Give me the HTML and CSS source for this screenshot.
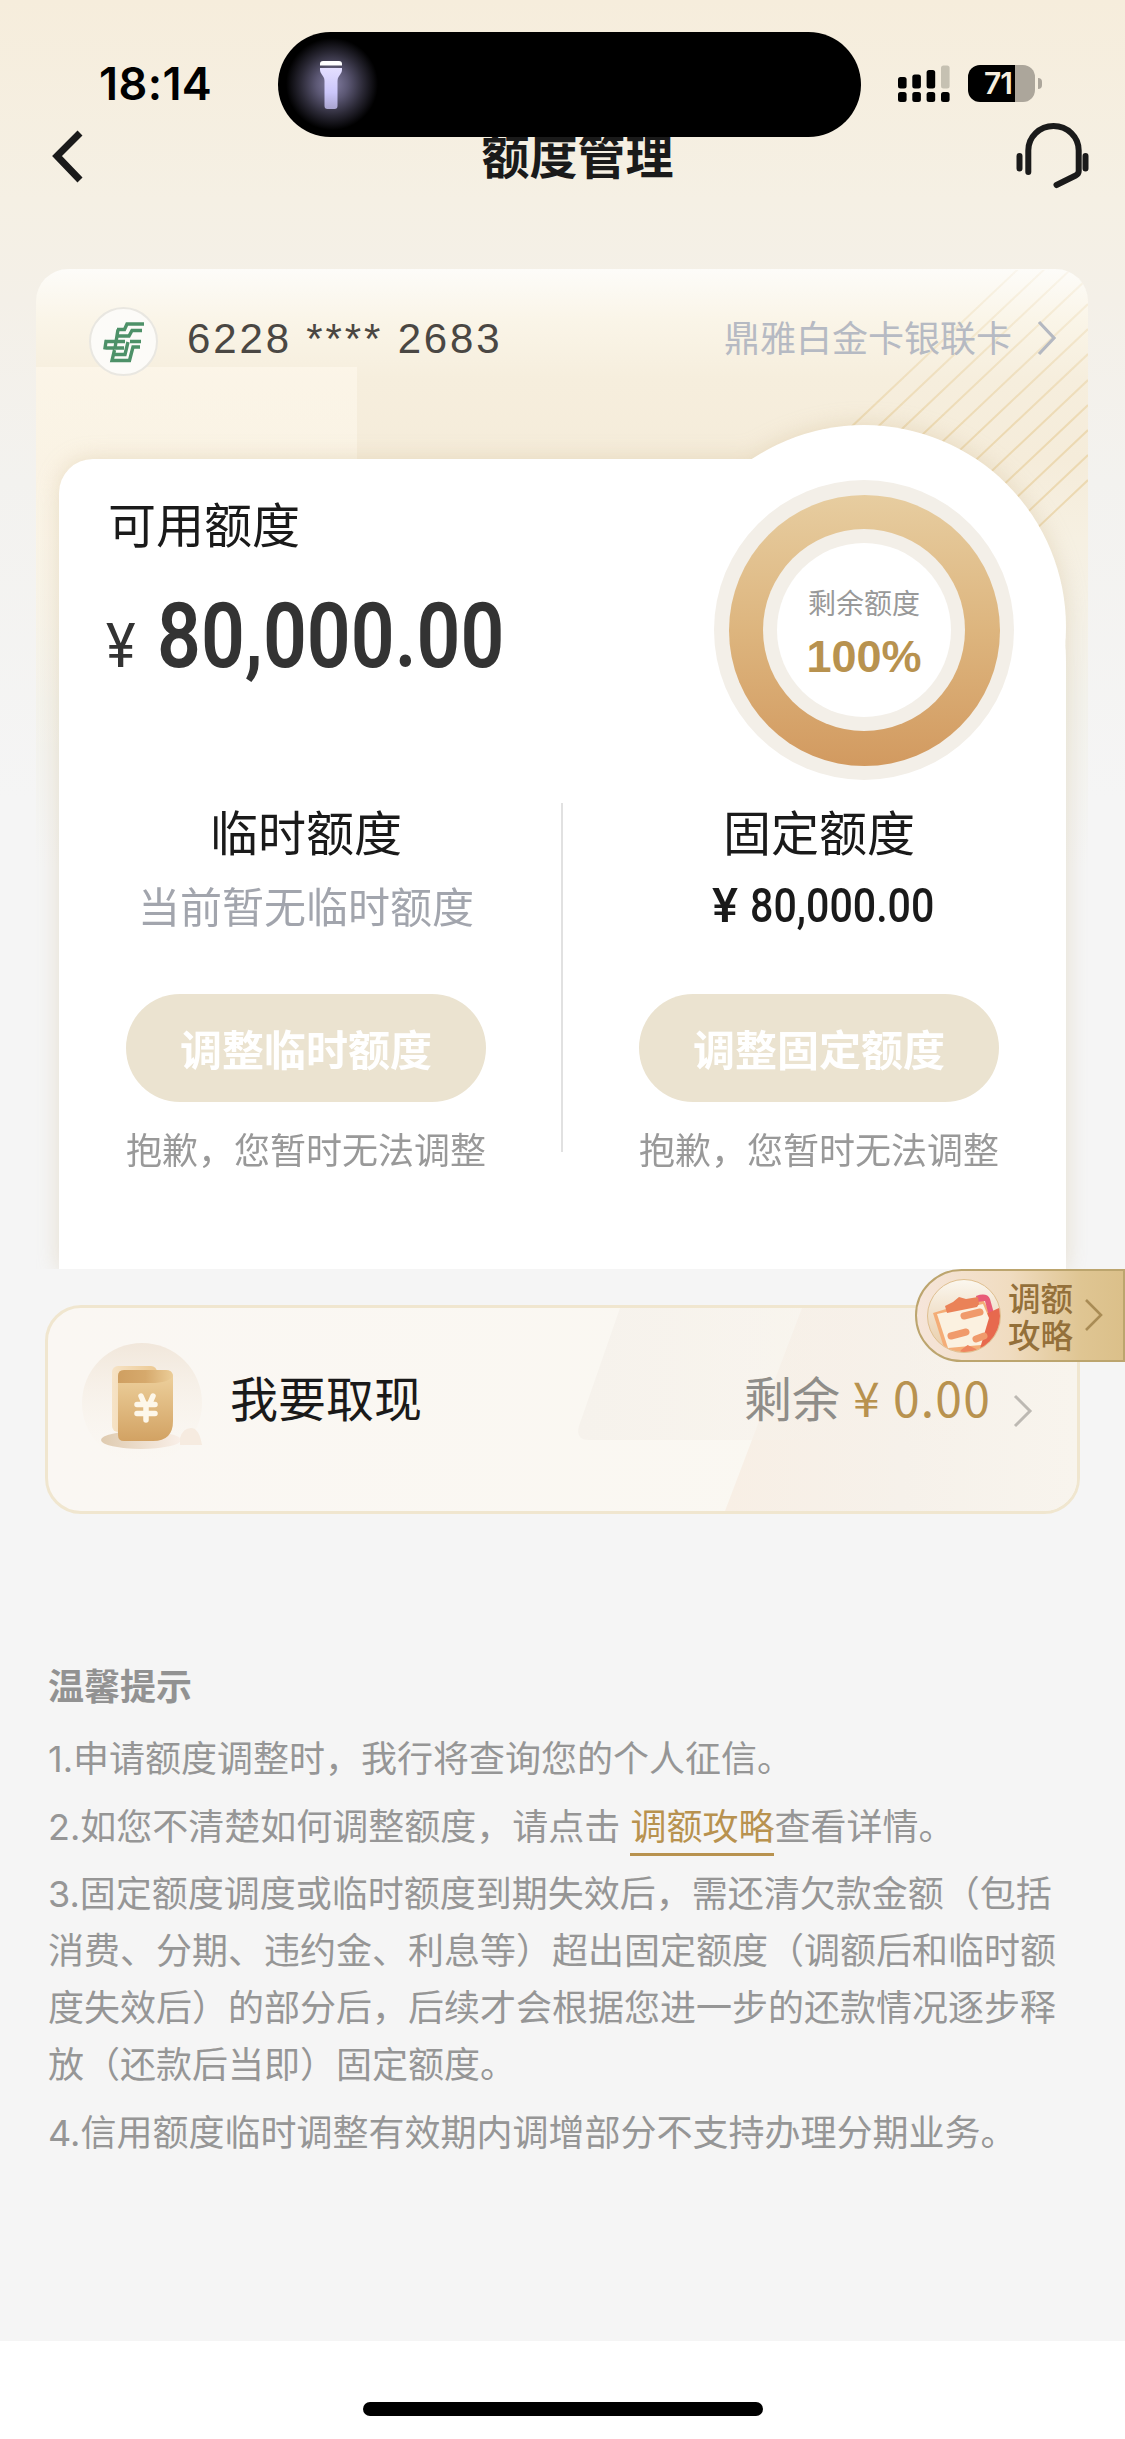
FILE: index.html
```html
<!DOCTYPE html>
<html lang="zh-CN">
<head>
<meta charset="utf-8">
<title>额度管理</title>
<link rel="stylesheet" href="styles.css">
</head>
<body>
<main class="page">
  <header class="top">
    <div class="status">
      <span class="time">18:14</span>
      <div class="island">
        <svg class="torch" width="24" height="50" viewBox="0 0 24 50">
          <defs><linearGradient id="torch" x1="0" y1="0" x2="0" y2="1"><stop offset="0" stop-color="#e4dfff"/><stop offset=".6" stop-color="#cbc6fa"/><stop offset="1" stop-color="#a9a4cf"/></linearGradient></defs>
          <path d="M1 5.500V4q0-3 3-3h16q3 0 3 3v1.500z" fill="#fff"/>
          <path d="M1 8h22v2q0 2-1.500 4l-2 3q-1 1.500-1 4v25q0 3-3 3h-7q-3 0-3-3V21q0-2.500-1-4l-2-3Q1 12 1 10z" fill="url(#torch)"/>
        </svg>
      </div>
      <div class="status-icons">
        <svg width="52" height="38" viewBox="0 0 52 38">
          <rect x="0" y="12" width="8.600" height="11.500" rx="2.500"/><rect x="14.300" y="9.500" width="8.600" height="14" rx="2.500"/><rect x="28.600" y="5" width="8.600" height="18.500" rx="2.500"/><rect x="43" y=".5" width="8.600" height="23" rx="2.500" fill="#c6c1b2"/>
          <rect x="0" y="27" width="8.600" height="10" rx="2.500"/><rect x="14.300" y="27" width="8.600" height="10" rx="2.500"/><rect x="28.600" y="27" width="8.600" height="10" rx="2.500"/><rect x="43" y="27" width="8.600" height="10" rx="2.500"/>
        </svg>
        <div class="battery"><span>71</span></div>
        <i class="nub"></i>
      </div>
    </div>
    <nav class="nav">
      <svg width="34" height="56" viewBox="0 0 34 56" fill="none" stroke="#1a1a1a" stroke-width="7"><path d="M29 5 6 28l23 24"/></svg>
      <h1>额度管理</h1>
      <svg width="76" height="70" viewBox="0 0 76 70" fill="none" stroke="#1a1a1a" stroke-width="6" stroke-linecap="round"><path d="M13.300 51V29.500a25.200 24.500 0 0 1 50.400 0V50q0 3-3 4.500L41.500 64M4.500 35v12.500M70.500 35v12.500"/></svg>
    </nav>
  </header>

  <section class="card">
    <svg class="rays" width="260" height="270" viewBox="0 0 260 270" fill="none" stroke="#ecd9b2" stroke-width="2">
      <defs><linearGradient id="fade" x1="0" y1="0" x2="0" y2="1"><stop offset="0" stop-color="#fff" stop-opacity=".15"/><stop offset=".6" stop-color="#fff"/></linearGradient><mask id="raymask"><rect width="260" height="270" fill="url(#fade)" stroke="none"/></mask></defs>
      <g mask="url(#raymask)"><path d="M260-67 0 179M260-42 0 204M260-17 0 229M260 8 0 254M260 34 0 280M260 59 0 305M260 84 0 330M260 110 0 356M260 135 0 381M260 160 0 406M260 185 0 431M260 210 0 456"/></g>
    </svg>
    <div class="card-head">
      <span class="bank">
        <svg width="44" height="44" viewBox="0 0 44 44" fill="none" stroke="#4d9168" stroke-width="3.400"><path d="M42 4H25l-2.500 5.500H15M40 10.500H30L27 16H14M16 9.500 13 28M3 21.500h20M28 21.500h11M3 28h19M4.200 20 2.800 29.500M38 27h-7l-3.500 13.500H10L12.500 30M11 34.500h12L26 22"/></svg>
      </span>
      <span class="number">6228 **** 2683</span>
      <span class="kind">鼎雅白金卡银联卡</span>
      <svg class="arrow" width="20" height="36" viewBox="0 0 20 36" fill="none" stroke="#b4b8c1" stroke-width="3.200"><path d="m2 2 15 16L2 34"/></svg>
    </div>
    <div class="panel">
      <div class="available">
        <h2>可用额度</h2>
        <div class="total"><span class="yen">¥</span><span class="digits">80,000.00</span></div>
      </div>
      <div class="bump"></div>
      <div class="gauge"><div class="gold"><div class="hole"><div class="core"><small>剩余额度</small><b>100%</b></div></div></div></div>
      <div class="limits">
        <div class="limit">
          <h2>临时额度</h2>
          <p class="none">当前暂无临时额度</p>
          <button>调整临时额度</button>
          <p class="sorry">抱歉，您暂时无法调整</p>
        </div>
        <div class="limit">
          <h2>固定额度</h2>
          <p class="fixed"><span>¥</span><span class="n">80,000.00</span></p>
          <button>调整固定额度</button>
          <p class="sorry">抱歉，您暂时无法调整</p>
        </div>
      </div>
    </div>
  </section>

  <section class="cash">
    <svg class="shapes" width="1029" height="203" viewBox="0 0 1029 203">
      <defs>
        <linearGradient id="s1"><stop offset="0" stop-color="#f6f2ec"/><stop offset="1" stop-color="#f6f0e8" stop-opacity="0"/></linearGradient>
        <linearGradient id="s2"><stop offset="0" stop-color="#f8efe5"/><stop offset=".5" stop-color="#f6f1ea"/><stop offset="1" stop-color="#f8f4ed"/></linearGradient>
      </defs>
      <path d="M754 0h275v203H677z" fill="url(#s2)"/>
      <path d="M572 0h360v132H541q-14 0-10-14z" fill="url(#s1)"/>
    </svg>
    <svg class="pouch" width="124" height="120" viewBox="0 0 124 120">
      <defs>
        <linearGradient id="disc" x1="0" y1="0" x2="0" y2="1"><stop offset="0" stop-color="#f1e7db"/><stop offset="1" stop-color="#fbf6ef" stop-opacity="0"/></linearGradient>
        <linearGradient id="bag" x1="0" y1="0" x2="0" y2="1"><stop offset="0" stop-color="#efd3a0"/><stop offset="1" stop-color="#d2a263"/></linearGradient>
        <linearGradient id="flap"><stop offset="0" stop-color="#cf9f61"/><stop offset=".5" stop-color="#d6a96c"/><stop offset="1" stop-color="#ebcd98"/></linearGradient>
        <linearGradient id="back"><stop offset="0" stop-color="#f6e3c6"/><stop offset="1" stop-color="#ecc993"/></linearGradient>
        <linearGradient id="ground"><stop offset="0" stop-color="#dfcbb0"/><stop offset="1" stop-color="#f9efe8"/></linearGradient>
      </defs>
      <circle cx="61" cy="61" r="60" fill="url(#disc)"/>
      <ellipse cx="60" cy="98" rx="40" ry="9" fill="url(#ground)"/>
      <path d="M99 103v-7q3-10 11-10t11 17z" fill="#f6ebe0"/>
      <rect x="31" y="24" width="45" height="66" rx="6" fill="url(#back)"/>
      <path d="M37 34q0-6 6-6h42q7 0 7 7v44q0 20-20 20H43q-6 0-6-6z" fill="url(#bag)"/>
      <path d="M37 34q0-6 6-6h42q6 0 7 6-4 7-22 7H37z" fill="url(#flap)"/>
      <path d="m60 54 3 7m9-7-3 7M56 62.500h18M56 71.500h18M65 62v16" fill="none" stroke="#fdf7ea" stroke-width="5.500" stroke-linecap="round"/>
    </svg>
    <span class="cash-title">我要取现</span>
    <span class="rest">剩余</span>
    <span class="sum"><i>¥</i>0.00</span>
    <svg class="go" width="20" height="34" viewBox="0 0 20 34" fill="none" stroke="#bdb9b3" stroke-width="3"><path d="m2 2 15 15L2 32"/></svg>
    <a class="guide">
      <svg width="76" height="76" viewBox="0 0 76 76">
        <defs>
          <linearGradient id="orb" x1="0" y1="0" x2="0" y2="1"><stop offset="0" stop-color="#fbf7ef"/><stop offset=".5" stop-color="#f0dfc8"/><stop offset="1" stop-color="#e9cda8"/></linearGradient>
          <clipPath id="orbclip"><circle cx="38" cy="38" r="36"/></clipPath>
        </defs>
        <circle cx="38" cy="38" r="36.500" fill="url(#orb)" stroke="#dfbf90"/>
        <g clip-path="url(#orbclip)">
          <path d="M7 35 56 20l9 16-5 40H20z" fill="#f4ad77"/>
          <path d="M50 18q11-4 14 3l5 18-6-1-4-15-8 1z" fill="#e85c78"/>
          <path d="m60 36 15-7v29L54 72z" fill="#e7694e"/>
          <path d="m11 36 46-10 6 14-8 27-33 3z" fill="#fbf1e0"/>
          <path d="m19 28 8-4 6-5 7 2 12-2 1 7-2 3-30 6z" fill="#ea8258"/>
          <g fill="none" stroke="#f09a6b" stroke-width="7" stroke-linecap="round"><path d="m38 38 16-4M25 58l15-4M50 61l8-3"/><path d="m38 74 4-3 6 3" stroke="#ee8660"/></g>
        </g>
      </svg>
      <span>调额攻略</span>
      <svg class="guide-arrow" width="20" height="34" viewBox="0 0 20 34" fill="none" stroke="#a98c55" stroke-width="2.600"><path d="m2 2 15 15L2 32"/></svg>
    </a>
  </section>

  <section class="tips">
    <h3>温馨提示</h3>
    <p>1.申请额度调整时，我行将查询您的个人征信。</p>
    <p>2.如您不清楚如何调整额度，请点击 <a>调额攻略</a>查看详情。</p>
    <p>3.固定额度调度或临时额度到期失效后，需还清欠款金额（包括<br>消费、分期、违约金、利息等）超出固定额度（调额后和临时额<br>度失效后）的部分后，后续才会根据您进一步的还款情况逐步释<br>放（还款后当即）固定额度。</p>
    <p>4.信用额度临时调整有效期内调增部分不支持办理分期业务。</p>
  </section>
  <footer class="home"><i></i></footer>
</main>
</body>
</html>
```
FILE: styles.css
```css
* { box-sizing: border-box; margin: 0; padding: 0; }
body { width: 1125px; background: #fff; font-family: "Noto Sans CJK SC", sans-serif; color: #1a1a1a; }
svg { display: block; flex: none; }
h1, h2 { font-size: 48px; line-height: 60px; white-space: nowrap; }
h2 { font-weight: 400; }
i { font-style: normal; }

.page { display: flex; flex-direction: column; height: 2439px; overflow: hidden;
  background: linear-gradient(180deg, #f6eddc 0, #f5f0e4 200px, #f4f0e8 300px, #f3f2ef 480px, #f5f5f5 800px); }

.top { height: 269px; }
.status { display: flex; height: 137px; padding: 32px 83px 0 99px; }
.time { width: 180px; padding-top: 25px; font: 600 45px/54px Inter, sans-serif; letter-spacing: .4px; color: #000; }
.island { z-index: 1; flex: none; width: 583px; height: 105px; padding: 28px 0 0 41px; border-radius: 53px;
  background: radial-gradient(circle 46px at 54px 52px, #8580a4 0, #5b5773 35%, #2b2936 68%, transparent 100%) #000; }
.torch { width: 24px; height: 50px; }
.status-icons { display: flex; margin-left: 37px; padding-top: 33px; }
.battery { width: 67px; height: 37px; margin-left: 18px; border-radius: 12px; background: linear-gradient(90deg, #000 47px, #aca69b 47px); }
.battery span { display: block; width: 48px; padding-left: 16px; font: 600 30px/37px Inter, sans-serif; letter-spacing: -1px; color: #f6eede; }
.nub { width: 4px; height: 11px; margin: 13px 0 0 3px; border-radius: 0 6px 6px 0; background: #aca69b; }
.nav { display: flex; align-items: flex-start; justify-content: space-between; padding: 0 34px 0 51px; }
.nav > svg:first-child { margin-top: -9px; }
.nav > svg:last-child { margin-top: -16px; }
.nav h1 { margin: -14px 0 0 55px; font-weight: 600; }

.card { position: relative; flex: none; width: 1052px; height: 1000px; margin-left: 36px; border-radius: 32px 32px 0 0; overflow: hidden;
  background: linear-gradient(180deg, rgba(255, 249, 238, .6), rgba(255, 249, 238, .5) 120px, rgba(255, 249, 238, 0)) 0 98px / 321px 400px no-repeat,
    linear-gradient(180deg, #fdfcf9 0, #faf5e8 50px, #f6eedd 110px, #f5ecda 190px, #f6f0e2 270px, #f3f2ec 430px, #f5f5f5 600px); }
.rays { position: absolute; top: 1px; right: 0; }
.card-head { position: relative; display: flex; height: 190px; padding: 38px 31px 0 53px; }
.bank { display: grid; place-items: center; width: 69px; height: 69px; border: 2px solid #e9e7e1; border-radius: 50%; background: #fcfbf8; }
.number { margin-left: 29px; font: 42px/63px "Liberation Sans", sans-serif; letter-spacing: 2.850px; color: #4a4743; white-space: pre; }
.kind { margin: -2px 0 0 auto; font-size: 36px; line-height: 62px; color: #b6bac3; }
.arrow { margin: 13px 0 0 25px; }
.panel { position: relative; width: 1007px; height: 810px; margin-left: 23px; border-radius: 34px 202px 0 0; background: #fff; filter: drop-shadow(0 0 11px rgba(196, 170, 118, .3)); }
.bump { position: absolute; top: -34px; right: 0; width: 404px; height: 404px; border-radius: 50%; background: #fff; }
.available { height: 330px; padding: 33px 0 0 49px; }
.total { display: flex; align-items: baseline; height: 100px; margin-top: 34px; font-family: Roboto, sans-serif; color: #333; }
.yen { width: 50px; margin-left: -2px; font-size: 61px; transform: scaleX(.92); transform-origin: left; }
.digits { margin-left: 1px; font-size: 91px; line-height: 100px; font-weight: 600; transform: scaleX(.845); transform-origin: left; }
.gauge, .gold, .hole, .core { display: grid; place-items: center; border-radius: 50%; }
.gauge { position: absolute; left: 655px; top: 21px; width: 300px; height: 300px; background: #f3efe8; }
.gold { width: 271px; height: 271px; background: linear-gradient(#e7cda0, #ddb57e 50%, #d29a60); }
.hole { width: 202px; height: 202px; background: #f3efe8; }
.core { width: 174px; height: 174px; align-content: center; background: #fff; }
.core small { margin-top: 5px; font-size: 28px; line-height: 36px; color: #999; }
.core b { margin-top: 12px; font: 700 45px/50px "Liberation Sans", sans-serif; color: #b8924f; }
.limits { position: relative; display: grid; grid-template-columns: 494px 513px; background: linear-gradient(#e1e1e1, #e1e1e1) 502px 14px / 2px 349px no-repeat; }
.limit { display: flex; flex-direction: column; align-items: center; padding-top: 11px; }
.limit:last-child { padding-left: 19px; }
.none, .fixed { height: 60px; margin-top: 15px; font-size: 42px; line-height: 60px; color: #a2a5ad; }
.fixed { display: flex; gap: 11px; width: 214px; font: 500 49px/62px Roboto, sans-serif; color: #1a1a1a; }
.fixed span { width: 27px; transform: scaleX(1); transform-origin: left; }
.fixed .n { transform: scaleX(.84); }
button { width: 360px; height: 108px; margin-top: 59px; border: 0; border-radius: 54px; background: #ebe3d0; color: #fff; font: 600 42px/106px "Noto Sans CJK SC", sans-serif; }
.sorry { margin-top: 21px; font-size: 36px; line-height: 50px; color: #999; }

.cash { position: relative; display: flex; flex: none; width: 1035px; height: 209px; margin: 36px 0 0 45px; padding: 34px 0 0 33px; border: 3px solid #f0e6cf; border-radius: 36px; background: linear-gradient(90deg, #faf7f3, #faf8f1); }
.shapes { position: absolute; inset: 0; border-radius: 33px; }
.pouch, .cash > span, .go { position: relative; }
.cash-title { margin-left: 25px; font-size: 48px; line-height: 60px; padding-top: 24px; }
.rest { margin-left: auto; padding-top: 24px; font-size: 48px; line-height: 60px; color: #8f8d89; }
.sum { display: flex; width: 138px; margin-left: 13px; padding-top: 24px; font-size: 48px; line-height: 60px; letter-spacing: 1.200px; color: #b8924f; }
.sum i { width: 40px; }
.go { margin: 52px 44px 0 22px; }
.guide { position: absolute; top: -39px; right: -48px; display: flex; width: 210px; height: 93px; padding: 7px 0 0 9px; border: 2px solid #bca56e; border-radius: 47px 0 0 47px; background: linear-gradient(90deg, #f6e5da 0, #f0dcc0 45%, #dfc592 80%, #dbc08a); }
.guide span { width: 66px; margin: 1px 0 0 6px; font-size: 32.500px; line-height: 36.500px; font-weight: 500; color: #94703a; }
.guide-arrow { margin: 20px 0 0 10px; }

.tips { flex: 1; padding: 145px 0 0 48px; font-family: Inter, "Noto Sans CJK SC", sans-serif; font-size: 36px; line-height: 57px; font-weight: 400; color: #969696; white-space: nowrap; }
.tips h3 { margin-bottom: 15px; font-size: 36px; line-height: 57px; font-weight: 600; color: #929292; }
.tips p + p { margin-top: 10.500px; }
.tips a { padding-bottom: 4px; border-bottom: 3px solid #b8924f; color: #b8924f; }
.home { flex: none; height: 98px; padding-top: 61px; background: #fff; }
.home i { display: block; width: 400px; height: 14px; margin: 0 auto; border-radius: 7px; background: #000; }
```
